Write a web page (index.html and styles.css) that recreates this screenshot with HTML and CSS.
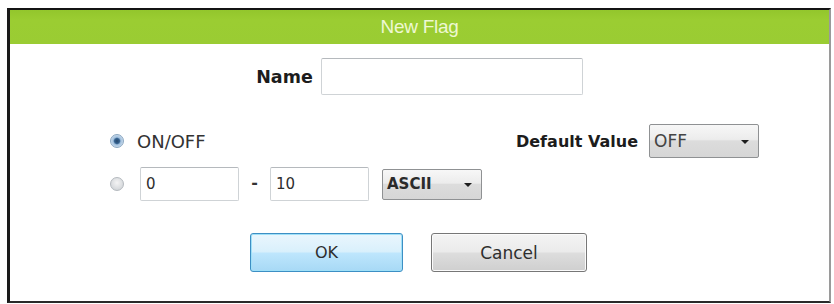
FILE: index.html
```html
<!DOCTYPE html>
<html>
<head>
<meta charset="utf-8">
<title>New Flag</title>
<link rel="stylesheet" href="styles.css">
</head>
<body>
<div class="dialog">
  <div class="titlebar">New Flag</div>
  <div class="content">
    <div class="name-row">
      <span class="label label-name">Name</span>
      <div class="textbox name-box"></div>
    </div>
    <div class="opt-row">
      <span class="radio checked"></span>
      <span class="opt-label">ON/OFF</span>
      <div class="default-group">
        <span class="label">Default Value</span>
        <div class="combo combo-default"><span class="combo-text">OFF</span><span class="caret"></span></div>
      </div>
    </div>
    <div class="opt-row range-row">
      <span class="radio"></span>
      <div class="textbox range-box">0</div>
      <span class="dash">-</span>
      <div class="textbox range-box">10</div>
      <div class="combo combo-ascii"><span class="combo-text bold">ASCII</span><span class="caret"></span></div>
    </div>
    <div class="buttons">
      <div class="btn btn-ok">OK</div>
      <div class="btn btn-cancel">Cancel</div>
    </div>
  </div>
</div>
</body>
</html>
```
FILE: styles.css
```css
html, body {
  margin: 0;
  padding: 0;
  background: #ffffff;
}

body {
  font-family: "DejaVu Sans", "Liberation Sans", sans-serif;
  color: #2a2a2a;
}

.dialog {
  box-sizing: border-box;
  width: 824px;
  height: 295px;
  margin: 8px 0 0 7px;
  border-top: 2px solid #141414;
  border-left: 3px solid #1a1a1a;
  border-bottom: 2px solid #2a2a2a;
  border-right: 2px solid #9a9a9a;
  display: flex;
  flex-direction: column;
  background: #ffffff;
}

.titlebar {
  height: 34px;
  background: linear-gradient(#93c62c, #9bcd32 30%, #9acc33);
  color: #eef8d2;
  font-family: "Liberation Sans", "DejaVu Sans", sans-serif;
  font-size: 19px;
  display: flex;
  align-items: center;
  justify-content: center;
  letter-spacing: -0.3px;
}

.content {
  display: flex;
  flex-direction: column;
  padding: 14px 70px 0 100px;
}

.name-row {
  display: flex;
  align-items: center;
  justify-content: center;
  gap: 8px;
  margin-left: -100px;
  margin-right: -70px;
  height: 37px;
}

.label {
  font-weight: bold;
  font-size: 16px;
  color: #1c1c1c;
}

.label-name {
  font-size: 17.5px;
}

.textbox {
  box-sizing: border-box;
  background: #ffffff;
  border: 1px solid #cfd3d6;
  border-top-color: #b5b9bd;
  border-radius: 2px;
  font-size: 15px;
  color: #2e2e2e;
  display: flex;
  align-items: center;
  padding-left: 5px;
}

.name-box {
  width: 262px;
  height: 37px;
}

.opt-row {
  display: flex;
  align-items: center;
  height: 34px;
  margin-top: 29px;
}

.range-row {
  margin-top: 9px;
}

.radio {
  box-sizing: border-box;
  width: 14px;
  height: 14px;
  border-radius: 50%;
  border: 1px solid #b4b9be;
  background: radial-gradient(circle at 50% 40%, #f4f4f4, #d6d9dc 70%, #c4c8cc);
  flex: none;
}

.radio.checked {
  border-color: #8aa6c0;
  background: radial-gradient(circle at 50% 50%, #24456a 0, #34618e 2.5px, #9fbedc 3.8px, #cfe0f0 6.5px);
}

.opt-label {
  margin-left: 13px;
  font-size: 18px;
  color: #333333;
}

.default-group {
  margin-left: auto;
  display: flex;
  align-items: center;
  gap: 11px;
}

.combo {
  box-sizing: border-box;
  display: flex;
  align-items: center;
  justify-content: space-between;
  border: 1px solid #8f9193;
  border-radius: 2px;
  background: linear-gradient(#f7f7f7, #ececec 45%, #dcdcdc 50%, #d6d6d6);
  padding: 0 9px 0 4px;
}

.combo-default {
  width: 110px;
  height: 34px;
  font-size: 17px;
  color: #444444;
}

.combo-ascii {
  width: 100px;
  height: 31px;
  margin-left: 13px;
  font-size: 15px;
  color: #2a2a2a;
}

.combo-text.bold {
  font-weight: bold;
}

.caret {
  width: 0;
  height: 0;
  border-left: 4px solid transparent;
  border-right: 4px solid transparent;
  border-top: 4px solid #1e1e1e;
  margin-top: 2px;
}

.range-row .radio {
  margin-right: 16px;
}

.range-box {
  width: 99px;
  height: 34px;
}

.dash {
  width: 31px;
  text-align: center;
  font-size: 16px;
  font-weight: bold;
  color: #333;
  margin-top: -4px;
}

.buttons {
  display: flex;
  justify-content: center;
  gap: 28px;
  margin-top: 32px;
  margin-left: -100px;
  margin-right: -68px;
}

.btn {
  box-sizing: border-box;
  height: 39px;
  border-radius: 3px;
  display: flex;
  align-items: center;
  justify-content: center;
  color: #2e2e2e;
}

.btn-ok {
  width: 153px;
  border: 1px solid #3d8fc4;
  box-shadow: inset 0 0 0 1px #9fe0f8;
  background: linear-gradient(#eaf6fd, #d9f0fc 48%, #bee6fd 52%, #a7d9f5);
  font-size: 16px;
}

.btn-cancel {
  width: 156px;
  border: 1px solid #777777;
  box-shadow: inset 0 0 0 1px #fbfbfb;
  background: linear-gradient(#f4f4f4, #ebebeb 48%, #dddddd 52%, #cfcfcf);
  font-size: 17px;
}
```
